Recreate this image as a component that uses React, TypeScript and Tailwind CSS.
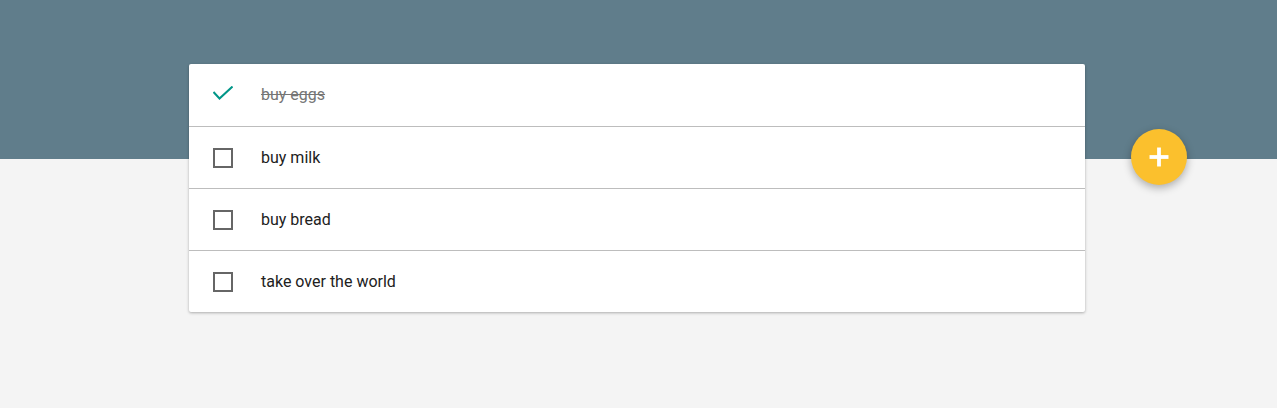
import { Plus } from "lucide-react";

const todos = [
  { text: "buy eggs", done: true },
  { text: "buy milk", done: false },
  { text: "buy bread", done: false },
  { text: "take over the world", done: false },
];

function CheckMark() {
  return (
    <svg width="20" height="14" viewBox="0 0 20 14" className="mb-1 block">
      <polyline points="0.5,6 6.5,12.5 19.5,0.5" fill="none" stroke="#009688" strokeWidth="2" />
    </svg>
  );
}

export default function App() {
  return (
    <div className="relative min-h-screen bg-[#f4f4f4] font-['Roboto',sans-serif]">
      <div className="h-[159px] bg-[#607d8b]" />
      <div className="-mt-[95px] pl-[189px]">
        <ul className="w-[896px] rounded-[2px] bg-white shadow-[0_1px_3px_rgba(0,0,0,0.3)]">
          {todos.map((todo, i) => (
            <li
              key={todo.text}
              className={`flex h-[62px] items-center pl-6 ${i > 0 ? "border-t border-[#bdbdbd]" : ""}`}
            >
              <div className="flex w-[20px] justify-center">
                {todo.done ? (
                  <CheckMark />
                ) : (
                  <div className="h-[20px] w-[20px] border-2 border-[#666]" />
                )}
              </div>
              <span
                className={`ml-[28px] text-[16px] ${
                  todo.done ? "text-[#757575] line-through" : "text-[#212121]"
                }`}
              >
                {todo.text}
              </span>
            </li>
          ))}
        </ul>
      </div>
      <button className="absolute left-[1131px] top-[129px] flex h-14 w-14 items-center justify-center rounded-full bg-[#fbc02d] text-white shadow-[0_3px_8px_rgba(0,0,0,0.3)]">
        <Plus size={26} strokeWidth={3.5} strokeLinecap="square" />
      </button>
    </div>
  );
}
